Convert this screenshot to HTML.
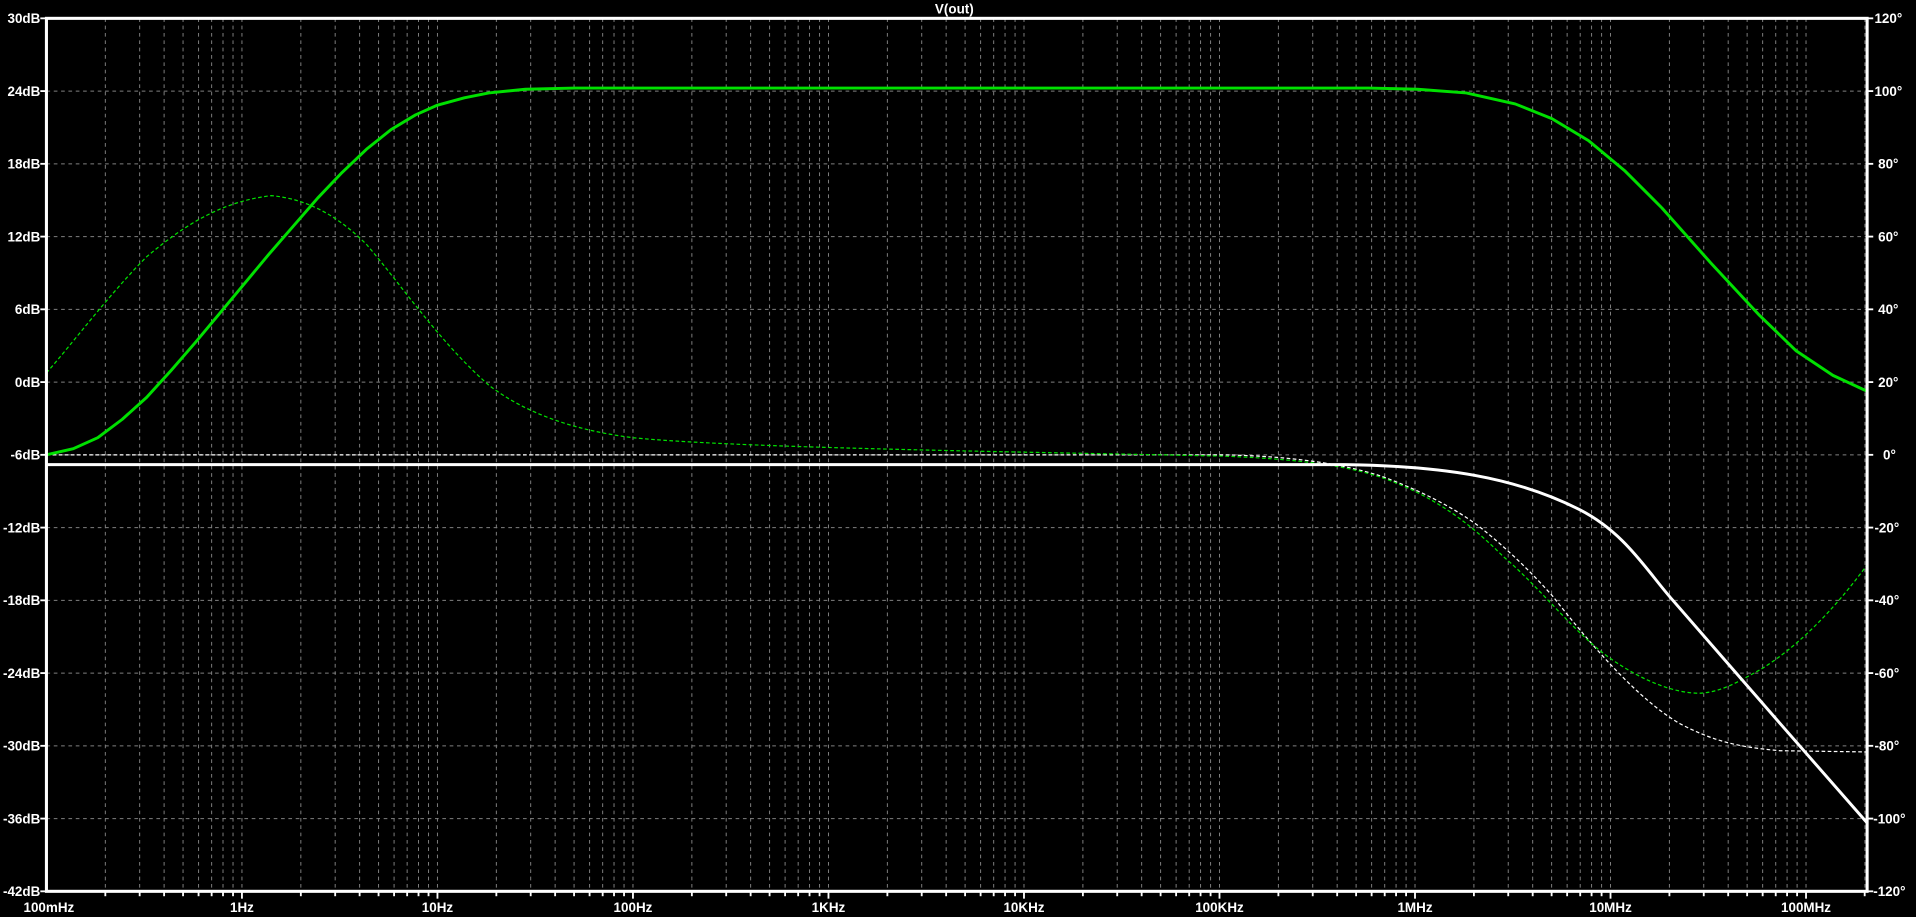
<!DOCTYPE html>
<html><head><meta charset="utf-8"><style>
html,body{margin:0;padding:0;background:#000;width:1916px;height:917px;overflow:hidden}
svg{display:block}
text{font-family:"Liberation Sans",sans-serif;font-weight:bold;font-size:11px;fill:#fff}
</style></head><body>
<svg width="1916" height="917" viewBox="0 0 1568 750" preserveAspectRatio="none">
<defs>
<g id="dec">
<line x1="48.2" y1="15" x2="48.2" y2="729"/><line x1="76.3" y1="15" x2="76.3" y2="729"/>
<line x1="96.3" y1="15" x2="96.3" y2="729"/><line x1="111.8" y1="15" x2="111.8" y2="729"/>
<line x1="124.5" y1="15" x2="124.5" y2="729"/><line x1="135.2" y1="15" x2="135.2" y2="729"/>
<line x1="144.5" y1="15" x2="144.5" y2="729"/><line x1="152.7" y1="15" x2="152.7" y2="729"/>
<line x1="160" y1="15" x2="160" y2="729"/>
</g>
<g id="tk">
<line x1="48.2" y1="729" x2="48.2" y2="733"/><line x1="76.3" y1="729" x2="76.3" y2="733"/>
<line x1="96.3" y1="729" x2="96.3" y2="733"/><line x1="111.8" y1="729" x2="111.8" y2="733"/>
<line x1="124.5" y1="729" x2="124.5" y2="733"/><line x1="135.2" y1="729" x2="135.2" y2="733"/>
<line x1="144.5" y1="729" x2="144.5" y2="733"/><line x1="152.7" y1="729" x2="152.7" y2="733"/>
<line x1="160" y1="729" x2="160" y2="735"/>
</g>
<clipPath id="c"><rect x="38" y="15" width="1490" height="714"/></clipPath>
</defs>
<g clip-path="url(#c)" stroke="#808080" stroke-width="0.8" stroke-dasharray="3,3">
<use href="#dec" x="38"/><use href="#dec" x="198"/><use href="#dec" x="358"/><use href="#dec" x="518"/><use href="#dec" x="678"/><use href="#dec" x="838"/><use href="#dec" x="998"/><use href="#dec" x="1158"/><use href="#dec" x="1318"/><use href="#dec" x="1478"/>
<line x1="38" x2="1528" y1="74.5" y2="74.5"/><line x1="38" x2="1528" y1="134" y2="134"/><line x1="38" x2="1528" y1="193.5" y2="193.5"/><line x1="38" x2="1528" y1="253" y2="253"/><line x1="38" x2="1528" y1="312.5" y2="312.5"/><line x1="38" x2="1528" y1="372" y2="372"/><line x1="38" x2="1528" y1="431.5" y2="431.5"/><line x1="38" x2="1528" y1="491" y2="491"/><line x1="38" x2="1528" y1="550.5" y2="550.5"/><line x1="38" x2="1528" y1="610" y2="610"/><line x1="38" x2="1528" y1="669.5" y2="669.5"/>
</g>
<g clip-path="url(#c)" fill="none" stroke-linejoin="round">
<path stroke="#fff" stroke-width="1" stroke-dasharray="3,2" d="M38,372 L1000,372 C1060,373 1100,380 1129,389 C1160,400 1190,415 1211,431 C1235,450 1255,470 1271,488 C1300,525 1340,572 1375,592 C1400,605 1420,611 1457,614 L1528,615"/>
<path stroke="#00e000" stroke-width="1" stroke-dasharray="3,2" d="M38,305 C60,280 90,240 120,210 C150,185 180,165 222,160 C255,163 280,180 300,200 C330,235 360,280 400,315 C430,338 470,352 518,358 C600,366 800,369 1000,373 C1080,376 1110,384 1129,390 C1170,404 1200,425 1230,455 C1260,480 1290,520 1320,540 C1345,557 1370,567 1391,567 C1410,566 1425,556 1440,548 C1470,530 1500,500 1528,462"/>
<path stroke="#fff" stroke-width="2.4" d="M38,380 L1100,380 C1180,381 1240,390 1293,417 C1330,436 1347,466 1369,491 L1457,592 L1528,673"/>
<path stroke="#00e000" stroke-width="2.4" d="M38,372 L60,367 L80,358 L100,343 L120,325 L140,303 L160,280 L180,256 L200,232 L220,208 L240,185 L260,162 L280,141 L300,122 L320,106 L340,94 L358,86 L380,80 L400,76 L430,73 L470,72 L1120,72 L1160,73 L1200,76 L1240,85 L1270,97 L1300,115 L1330,140 L1360,170 L1400,215 L1440,258 L1470,287 L1500,307 L1528,320"/>
</g>
<g stroke="#fff" stroke-width="1.5">
<use href="#tk" x="38"/><use href="#tk" x="198"/><use href="#tk" x="358"/><use href="#tk" x="518"/><use href="#tk" x="678"/><use href="#tk" x="838"/><use href="#tk" x="998"/><use href="#tk" x="1158"/><use href="#tk" x="1318"/>
<line x1="1526" y1="729" x2="1526" y2="733"/>
<line x1="33" x2="38" y1="15" y2="15"/><line x1="33" x2="38" y1="74.5" y2="74.5"/><line x1="33" x2="38" y1="134" y2="134"/><line x1="33" x2="38" y1="193.5" y2="193.5"/><line x1="33" x2="38" y1="253" y2="253"/><line x1="33" x2="38" y1="312.5" y2="312.5"/><line x1="33" x2="38" y1="372" y2="372"/><line x1="33" x2="38" y1="431.5" y2="431.5"/><line x1="33" x2="38" y1="491" y2="491"/><line x1="33" x2="38" y1="550.5" y2="550.5"/><line x1="33" x2="38" y1="610" y2="610"/><line x1="33" x2="38" y1="669.5" y2="669.5"/><line x1="33" x2="38" y1="729" y2="729"/>
<line x1="1528" x2="1533" y1="15" y2="15"/><line x1="1528" x2="1533" y1="74.5" y2="74.5"/><line x1="1528" x2="1533" y1="134" y2="134"/><line x1="1528" x2="1533" y1="193.5" y2="193.5"/><line x1="1528" x2="1533" y1="253" y2="253"/><line x1="1528" x2="1533" y1="312.5" y2="312.5"/><line x1="1528" x2="1533" y1="372" y2="372"/><line x1="1528" x2="1533" y1="431.5" y2="431.5"/><line x1="1528" x2="1533" y1="491" y2="491"/><line x1="1528" x2="1533" y1="550.5" y2="550.5"/><line x1="1528" x2="1533" y1="610" y2="610"/><line x1="1528" x2="1533" y1="669.5" y2="669.5"/><line x1="1528" x2="1533" y1="729" y2="729"/>
</g>
<rect x="38" y="15" width="1490" height="714" fill="none" stroke="#fff" stroke-width="2.5"/>
<text x="781" y="11" text-anchor="middle">V(out)</text>
<g text-anchor="end">
<text x="33" y="19">30dB</text><text x="33" y="78.5">24dB</text><text x="33" y="138">18dB</text><text x="33" y="197.5">12dB</text><text x="33" y="257">6dB</text><text x="33" y="316.5">0dB</text><text x="33" y="376">-6dB</text><text x="33" y="435.5">-12dB</text><text x="33" y="495">-18dB</text><text x="33" y="554.5">-24dB</text><text x="33" y="614">-30dB</text><text x="33" y="673.5">-36dB</text><text x="33" y="733">-42dB</text>
</g>
<g>
<text x="1534" y="19">120°</text><text x="1534" y="78.5">100°</text><text x="1537" y="138">80°</text><text x="1537" y="197.5">60°</text><text x="1537" y="257">40°</text><text x="1537" y="316.5">20°</text><text x="1541" y="376">0°</text><text x="1534" y="435.5">-20°</text><text x="1534" y="495">-40°</text><text x="1534" y="554.5">-60°</text><text x="1534" y="614">-80°</text><text x="1533" y="673.5">-100°</text><text x="1533" y="733">-120°</text>
</g>
<g text-anchor="middle">
<text x="40" y="746">100mHz</text><text x="198" y="746">1Hz</text><text x="358" y="746">10Hz</text><text x="518" y="746">100Hz</text><text x="678" y="746">1KHz</text><text x="838" y="746">10KHz</text><text x="998" y="746">100KHz</text><text x="1158" y="746">1MHz</text><text x="1318" y="746">10MHz</text><text x="1478" y="746">100MHz</text>
</g>
</svg>
</body></html>
